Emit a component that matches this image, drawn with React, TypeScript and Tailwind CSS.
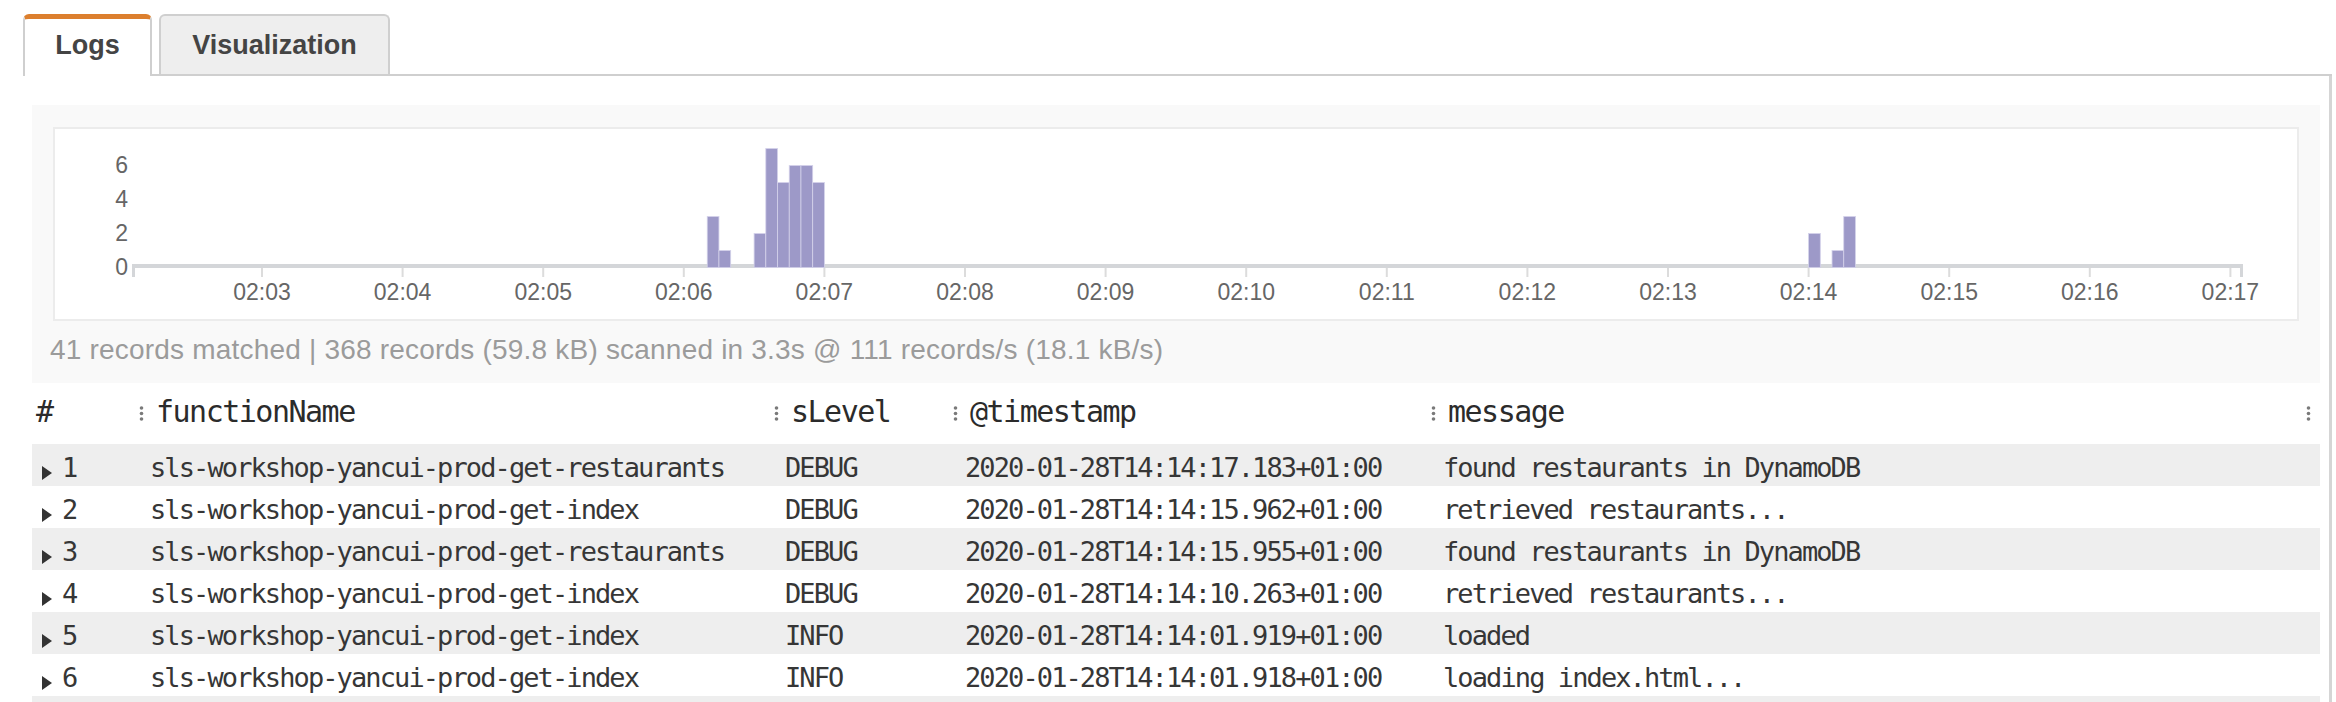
import React from "react";

const tickLabels = [
  "02:03", "02:04", "02:05", "02:06", "02:07", "02:08", "02:09", "02:10",
  "02:11", "02:12", "02:13", "02:14", "02:15", "02:16", "02:17",
];

// 5 second bins, seconds counted from 02:00:00
const bins = [
  { t: 370, v: 3 },
  { t: 375, v: 1 },
  { t: 390, v: 2 },
  { t: 395, v: 7 },
  { t: 400, v: 5 },
  { t: 405, v: 6 },
  { t: 410, v: 6 },
  { t: 415, v: 5 },
  { t: 840, v: 2 },
  { t: 850, v: 1 },
  { t: 855, v: 3 },
];

const rows = [
  { fn: "sls-workshop-yancui-prod-get-restaurants", level: "DEBUG", ts: "2020-01-28T14:14:17.183+01:00", msg: "found restaurants in DynamoDB" },
  { fn: "sls-workshop-yancui-prod-get-index", level: "DEBUG", ts: "2020-01-28T14:14:15.962+01:00", msg: "retrieved restaurants..." },
  { fn: "sls-workshop-yancui-prod-get-restaurants", level: "DEBUG", ts: "2020-01-28T14:14:15.955+01:00", msg: "found restaurants in DynamoDB" },
  { fn: "sls-workshop-yancui-prod-get-index", level: "DEBUG", ts: "2020-01-28T14:14:10.263+01:00", msg: "retrieved restaurants..." },
  { fn: "sls-workshop-yancui-prod-get-index", level: "INFO", ts: "2020-01-28T14:14:01.919+01:00", msg: "loaded" },
  { fn: "sls-workshop-yancui-prod-get-index", level: "INFO", ts: "2020-01-28T14:14:01.918+01:00", msg: "loading index.html..." },
];

function Histogram() {
  const x0 = 207; // 02:03 tick
  const perMin = 140.6;
  const base = 138.5;
  const unit = 17;
  const xOf = (sec: number) => x0 + ((sec - 180) / 60) * perMin;

  return (
    <svg width="2242" height="190" className="block">
      {/* y axis labels */}
      {[6, 4, 2, 0].map((n, i) => (
        <text
          key={n}
          x={73}
          y={44 + i * 34}
          textAnchor="end"
          fontSize="23"
          fill="#666"
          fontFamily="Liberation Sans, Arial, sans-serif"
        >
          {n}
        </text>
      ))}

      {/* axis line */}
      <rect x={77} y={135} width={2111} height={4} fill="#d4d6d9" />
      <rect x={77} y={135} width={3} height={13} fill="#d4d6d9" />
      <rect x={2185} y={135} width={3} height={13} fill="#d4d6d9" />

      {tickLabels.map((label, k) => {
        const x = xOf(180 + k * 60);
        return (
          <g key={label}>
            <rect x={x - 1} y={139} width={2} height={9} fill="#dcdcdc" />
            <text
              x={x}
              y={171}
              textAnchor="middle"
              fontSize="23"
              fill="#666"
              fontFamily="Liberation Sans, Arial, sans-serif"
            >
              {label}
            </text>
          </g>
        );
      })}

      {bins.map((b) => (
        <rect
          key={b.t}
          x={xOf(b.t)}
          y={base - b.v * unit}
          width={perMin / 12}
          height={b.v * unit}
          fill="#9d99c8"
          stroke="#d4d2ea"
          strokeWidth={0.8}
        />
      ))}
    </svg>
  );
}

function Dots() {
  return (
    <svg width="5" height="15" className="shrink-0">
      <circle cx="2.5" cy="2" r="1.8" fill="#7a7a7a" />
      <circle cx="2.5" cy="7.5" r="1.8" fill="#7a7a7a" />
      <circle cx="2.5" cy="13" r="1.8" fill="#7a7a7a" />
    </svg>
  );
}

function HeaderCell({ label }: { label: string }) {
  return (
    <div className="flex items-center h-[61px]">
      <Dots />
      <span className="ml-[12px] leading-[57px] pb-[4px]">{label}</span>
    </div>
  );
}

export default function App() {
  return (
    <div className="w-[2336px] bg-white font-['Liberation_Sans',Arial,sans-serif]">
      {/* tabs */}
      <div className="ml-[23px] w-[2309px] pt-[14px] flex gap-[7px] border-b-2 border-[#cfcfcf]">
        <div className="w-[129px] h-[62px] -mb-[2px] bg-white border-t-[5px] border-t-[#dc7f2e] border-x-2 border-x-[#cfcfcf] rounded-t-[6px] text-center text-[27px] font-bold text-[#444] leading-[53px]">
          Logs
        </div>
        <div className="w-[231px] h-[60px] bg-[#eeeeee] border-2 border-b-0 border-[#cfcfcf] rounded-t-[6px] text-center text-[27px] font-bold text-[#444] leading-[58px]">
          Visualization
        </div>
      </div>

      <div className="w-[2332px] pt-[29px] pl-[32px] pr-[9px] border-r-[3px] border-[#d5d5d5]">
        {/* histogram panel */}
        <div className="bg-[#f9f9f9] pt-[22px] px-[21px]">
          <div className="h-[194px] bg-white border-2 border-[#ececec]">
            <Histogram />
          </div>
          <div className="-mx-[3px] mt-[13px] pb-[17px] leading-[32px] text-[28px] tracking-[0.2px] text-[#9b9b9b]">
            41 records matched | 368 records (59.8 kB) scanned in 3.3s @ 111 records/s (18.1 kB/s)
          </div>
        </div>

        {/* results table */}
        <div className="font-['DejaVu_Sans_Mono',monospace]">
          <div className="grid grid-cols-[107px_635px_179px_478px_875px_1fr] text-[30px] tracking-[-1.5px] text-[#2b2b2b]">
            <div className="h-[61px] pl-[4px] leading-[57px]">#</div>
            <HeaderCell label="functionName" />
            <HeaderCell label="sLevel" />
            <HeaderCell label="@timestamp" />
            <HeaderCell label="message" />
            <div className="flex items-center h-[61px]">
              <Dots />
            </div>
          </div>

          {rows.map((r, i) => (
            <div
              key={i}
              className={`grid grid-cols-[118px_635px_180px_478px_1fr] h-[42px] pt-[5px] leading-[37px] text-[27px] tracking-[-1.9px] text-[#363636] ${
                i % 2 === 0 ? "bg-[#eeeeee]" : "bg-white"
              }`}
            >
              <div className="flex items-center">
                <svg width="10" height="14" className="ml-[10px] mt-[10px] shrink-0">
                  <path d="M0 0 L10 7 L0 14 Z" fill="#333" />
                </svg>
                <span className="ml-[10px]">{i + 1}</span>
              </div>
              <div className="whitespace-nowrap">{r.fn}</div>
              <div>{r.level}</div>
              <div className="whitespace-nowrap">{r.ts}</div>
              <div className="whitespace-nowrap">{r.msg}</div>
            </div>
          ))}
          {/* next row, cut by the frame */}
          <div className="h-[6px] bg-[#eeeeee]" />
        </div>
      </div>
    </div>
  );
}
